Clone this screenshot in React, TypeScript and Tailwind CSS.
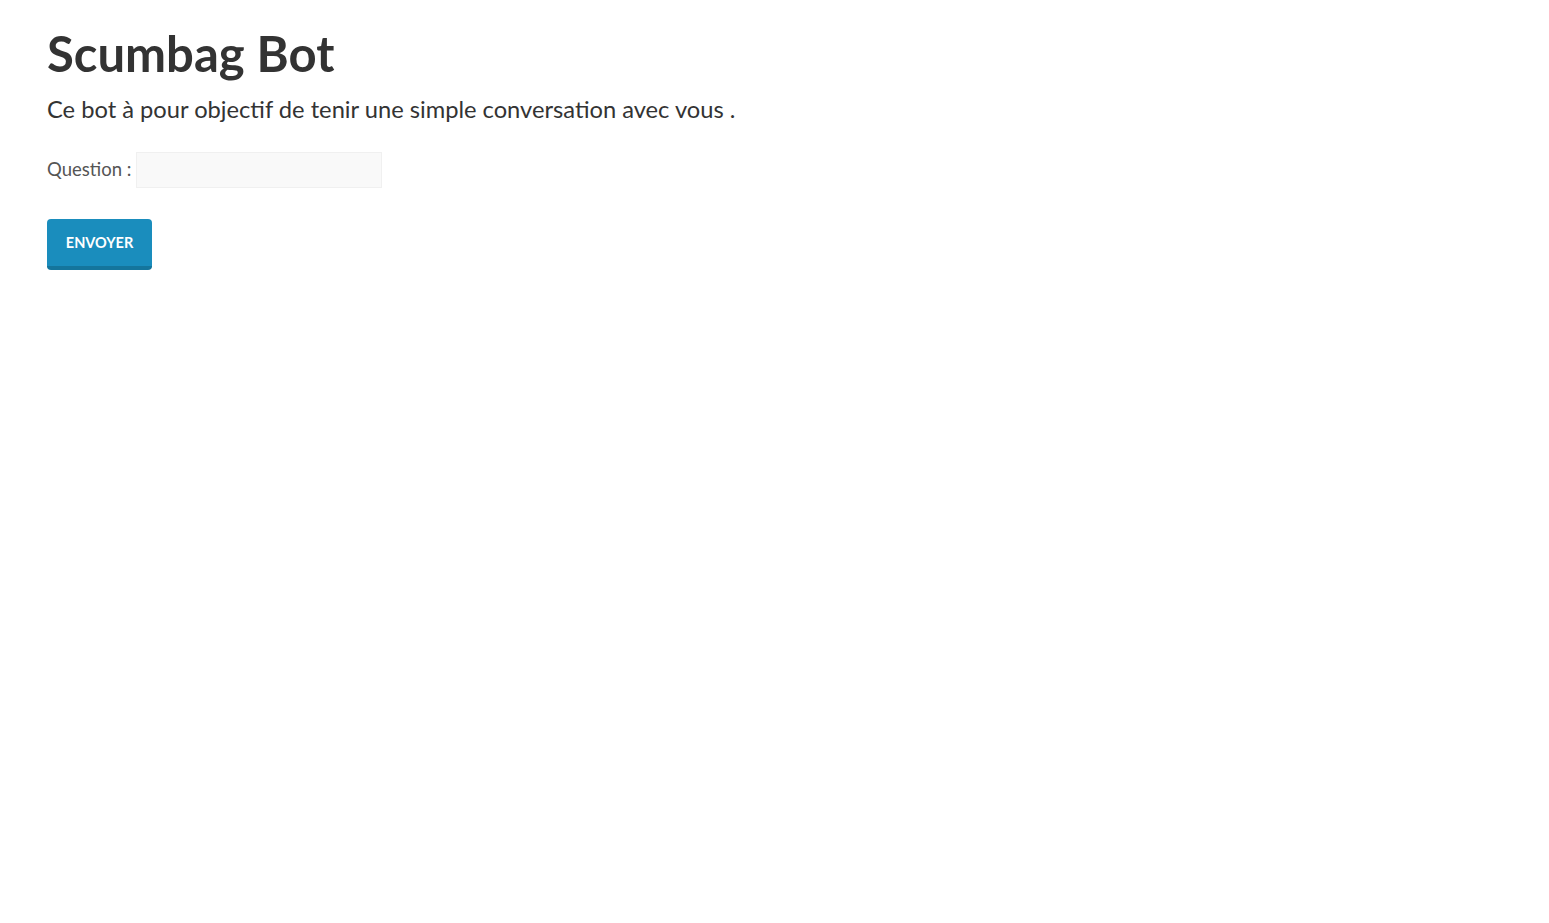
import React from 'react';

const font = { fontFamily: 'Lato, "Open Sans", sans-serif' };

export default function App() {
  return (
    <div className="min-h-screen bg-white px-[47px] pt-[21px] text-[#333]" style={font}>
      <h1 className="text-[49px] font-bold leading-[64px] text-[#333]">Scumbag Bot</h1>
      <p className="mt-[8px] text-[23.7px] leading-[32px] text-[#333]">
        Ce bot à pour objectif de tenir une simple conversation avec vous .
      </p>
      <form className="mt-[27px]" onSubmit={(e) => e.preventDefault()}>
        <div className="flex items-center gap-[5px]">
          <label htmlFor="question" className="text-[18.5px] text-[#555]">
            Question :
          </label>
          <input
            id="question"
            type="text"
            className="h-[36px] w-[246px] border border-[#f0f0f0] bg-[#f9f9f9] px-2 outline-none"
          />
        </div>
        <button
          type="submit"
          className="mt-[31px] h-[51px] w-[105px] rounded-[4px] border-b-[4px] border-[#14759c] bg-[#1a8dbd] text-[14.5px] font-bold text-white"
        >
          ENVOYER
        </button>
      </form>
    </div>
  );
}
